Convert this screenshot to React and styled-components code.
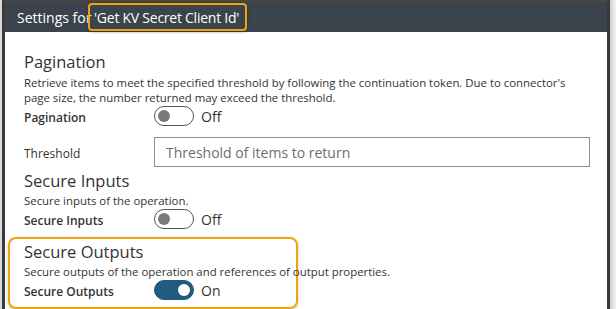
import styled, { createGlobalStyle } from "styled-components";

const GlobalStyle = createGlobalStyle`
  html, body {
    margin: 0;
    padding: 0;
    background: #ffffff;
  }
  body {
    font-family: "Open Sans", "Noto Sans", sans-serif;
    color: #333333;
  }
`;

const Frame = styled.div`
  display: flex;
  width: 616px;
  height: 309px;
  overflow: hidden;
  padding-left: 2px;
  box-sizing: border-box;
  background-color: #dadada;
`;

const Panel = styled.div`
  width: 602px;
  flex: none;
  display: flex;
  flex-direction: column;
  background: #ffffff;
  border-left: 3px solid #3a3a3a;
  border-right: 3px solid #3a3a3a;
  border-top: 2px solid #4a4540;
`;

const Shade = styled.div`
  flex: 1;
  background: linear-gradient(to right, #cfcfcf, #f4f4f4);
`;

const Header = styled.div`
  height: 31px;
  display: flex;
  align-items: center;
  padding-left: 12px;
  background: #3b434c;
  color: #ffffff;
  font-size: 14px;
  white-space: pre;
`;

const Callout = styled.span`
  display: inline-flex;
  align-items: center;
  height: 24px;
  padding: 0 6px 0 4px;
  margin-left: -7px;
  letter-spacing: -0.25px;
  border: 2px solid #f0a30a;
  border-radius: 4px;
  box-shadow: 0 1px 3px rgba(0, 0, 0, 0.35);
`;

const Body = styled.div`
  display: flex;
  flex-direction: column;
  padding: 18px 14px 0 3px;
`;

const Section = styled.div`
  display: flex;
  flex-direction: column;
  padding: ${(p) => (p.highlight ? "3px 0 6px 14px" : "0 0 0 14px")};
  margin-top: ${(p) => p.gap || 0}px;
  align-self: flex-start;
  width: ${(p) => (p.highlight ? "272px" : "567px")};
  border: 2px solid ${(p) => (p.highlight ? "#f0a30a" : "transparent")};
  border-radius: 8px;
  box-shadow: ${(p) => (p.highlight ? "0 1px 3px rgba(0,0,0,0.25)" : "none")};
`;

const Title = styled.div`
  font-size: 16.5px;
  line-height: 20px;
  margin-bottom: ${(p) => p.space || 2}px;
  color: #333333;
  white-space: nowrap;
`;

const Desc = styled.div`
  font-size: 11.4px;
  line-height: 15px;
  color: #333333;
  white-space: nowrap;
`;

const Row = styled.div`
  display: flex;
  align-items: center;
  min-height: 22px;
  margin-top: ${(p) => p.gap || 0}px;
`;

const Label = styled.div`
  width: 130px;
  flex: none;
  font-size: 12px;
  font-weight: ${(p) => (p.plain ? 400 : 600)};
  padding-top: 3px;
  color: #333333;
`;

const Toggle = styled.div`
  width: 40px;
  height: 20px;
  box-sizing: border-box;
  border-radius: 10px;
  border: 1px solid ${(p) => (p.on ? "#215b80" : "#555555")};
  background: ${(p) => (p.on ? "#215b80" : "#ffffff")};
  display: flex;
  align-items: center;
  justify-content: ${(p) => (p.on ? "flex-end" : "flex-start")};
  padding: 0 3px;

  &::before {
    content: "";
    width: 12px;
    height: 12px;
    border-radius: 50%;
    background: ${(p) => (p.on ? "#ffffff" : "#7a7a7a")};
  }
`;

const State = styled.span`
  margin-left: 7px;
  font-size: 14px;
  color: #333333;
`;

const Input = styled.input`
  width: 436px;
  height: 30px;
  box-sizing: border-box;
  border: 1px solid #8f8f8f;
  padding: 0 11px;
  font-family: inherit;
  font-size: 14px;
  color: #333333;
  outline: none;

  &::placeholder {
    color: #6e6e6e;
  }
`;

function Switch({ label, on }) {
  return (
    <Row>
      <Label>{label}</Label>
      <Toggle on={on ? 1 : 0} />
      <State>{on ? "On" : "Off"}</State>
    </Row>
  );
}

export default function App() {
  return (
    <>
      <GlobalStyle />
      <Frame>
        <Panel>
          <Header>
            Settings for <Callout>'Get KV Secret Client Id'</Callout>
          </Header>
          <Body>
            <Section>
              <Title space={3}>Pagination</Title>
              <Desc>
                Retrieve items to meet the specified threshold by following the
                continuation token. Due to connector's
              </Desc>
              <Desc>page size, the number returned may exceed the threshold.</Desc>
              <Switch label="Pagination" />
              <Row gap={10}>
                <Label plain>Threshold</Label>
                <Input placeholder="Threshold of items to return" />
              </Row>
            </Section>
            <Section>
              <Title>Secure Inputs</Title>
              <Desc>Secure inputs of the operation.</Desc>
              <Switch label="Secure Inputs" />
            </Section>
            <Section highlight gap={5}>
              <Title>Secure Outputs</Title>
              <Desc>
                Secure outputs of the operation and references of output
                properties.
              </Desc>
              <Switch label="Secure Outputs" on />
            </Section>
          </Body>
        </Panel>
        <Shade />
      </Frame>
    </>
  );
}
